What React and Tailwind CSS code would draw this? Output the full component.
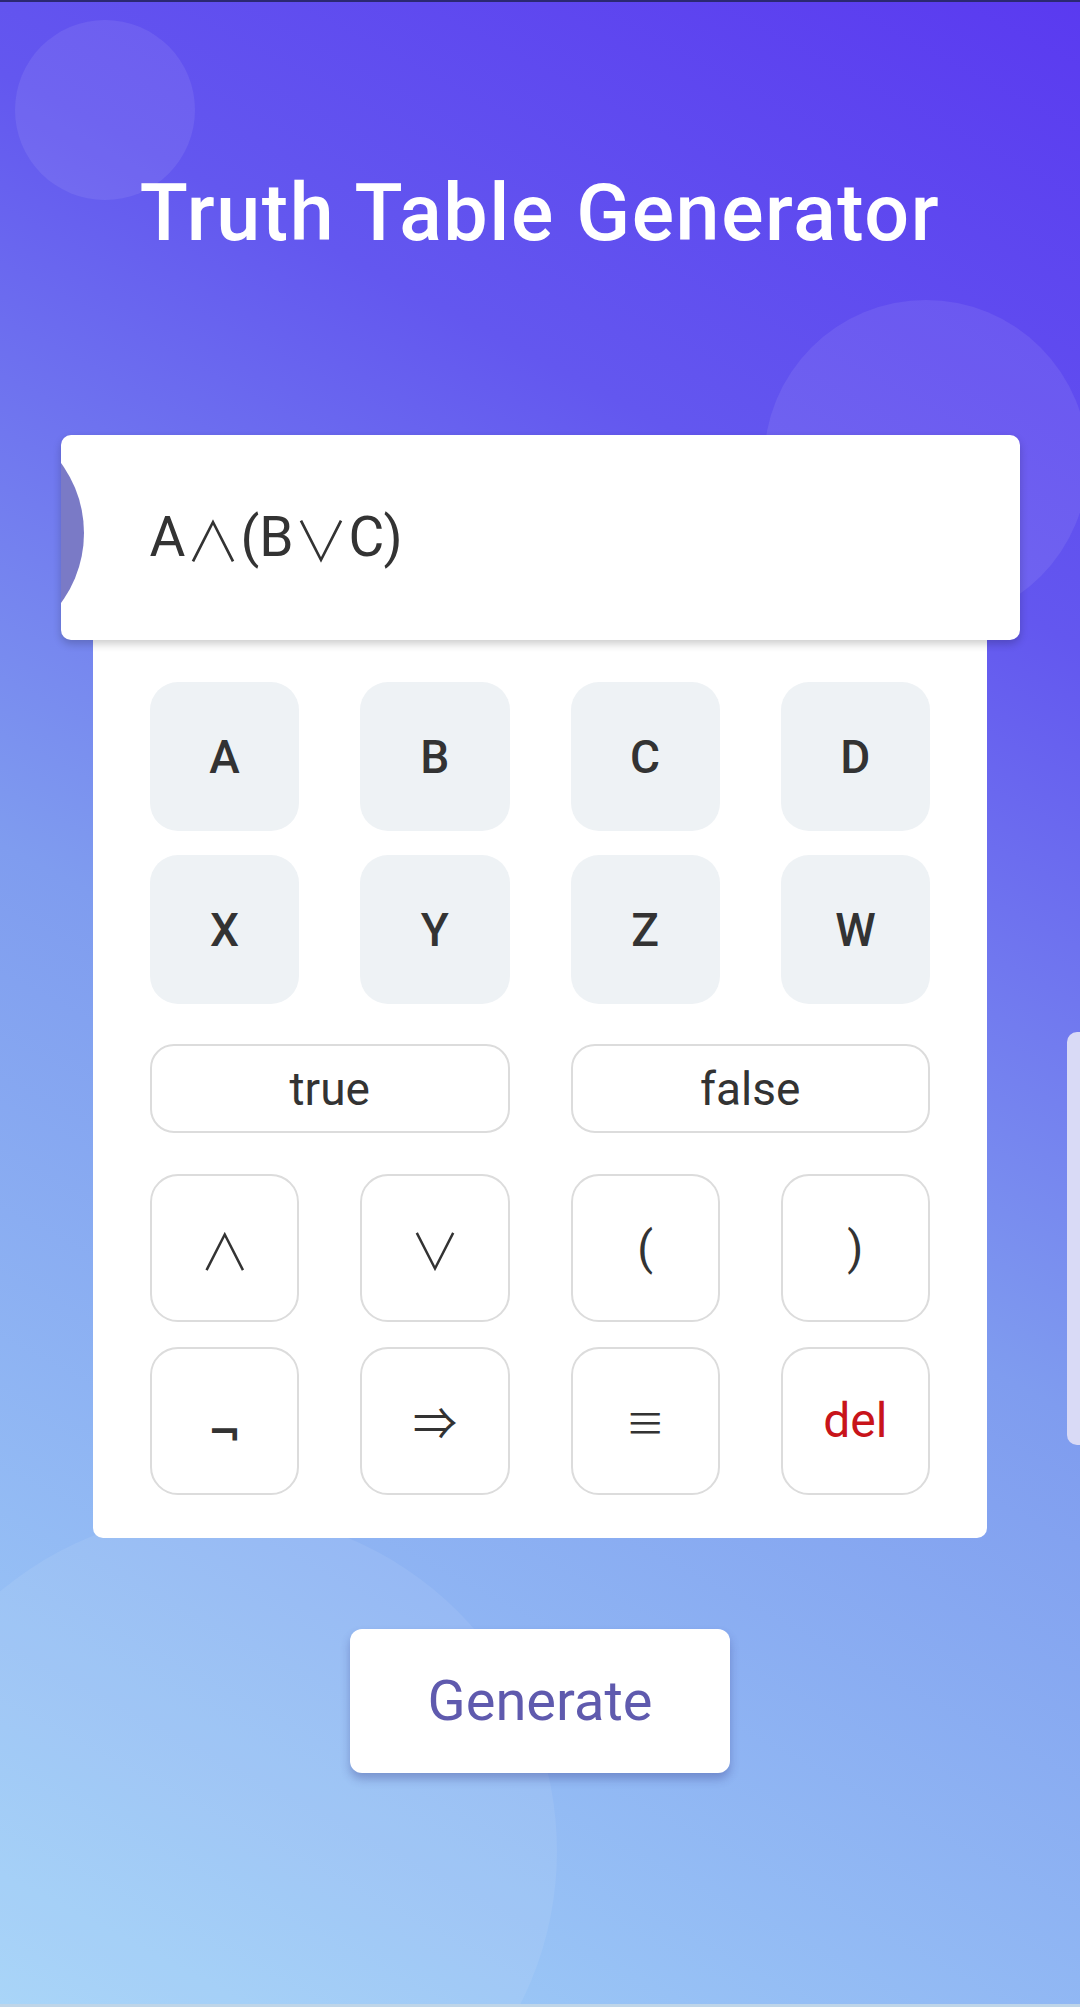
import React from "react";

const sym = { fontFamily: '"Noto Sans CJK JP", "DejaVu Sans", sans-serif' };

function LetterKey({ children }) {
  return (
    <button className="h-[149px] rounded-[28px] bg-[#eef2f5] text-[46px] font-medium text-[#333] flex items-center justify-center leading-none">
      {children}
    </button>
  );
}

function OpKey({ children, className = "" }) {
  return (
    <button
      className={
        "h-[148px] rounded-[28px] bg-white border-2 border-[#dcdcdc] flex items-center justify-center leading-none " +
        className
      }
    >
      {children}
    </button>
  );
}

export default function App() {
  return (
    <div
      className="relative w-full h-[2007px] overflow-hidden border-t-2 border-[#2b2872] border-b-[3px] border-b-[#bfd5e8] bg-[linear-gradient(28deg,#a2d2f8_0%,#7f9cef_45%,#6357ef_75%,#5a3af0_100%)] font-['Roboto',sans-serif]"
    >
      {/* decorative circles */}
      <div className="absolute left-[15px] top-[18px] w-[180px] h-[180px] rounded-full bg-white/[0.08]" />
      <div className="absolute left-[764px] top-[298px] w-[324px] h-[324px] rounded-full bg-white/[0.08]" />
      <div className="absolute left-[-121px] top-[1510px] w-[678px] h-[678px] rounded-full bg-white/[0.08]" />

      {/* side tab */}
      <div className="absolute right-0 top-[1030px] w-[13px] h-[413px] rounded-l-[10px] bg-[#d9daf6]" />

      <div className="relative flex flex-col items-center">
        <h1 className="mt-[173px] h-[77px] flex items-center text-[79px] leading-none font-medium text-white tracking-[1.6px]">
          Truth Table Generator
        </h1>

        <div className="mt-[183px] w-[959px] flex flex-col items-center">
          <div className="relative z-10 w-[959px] h-[205px] rounded-[10px] bg-white overflow-hidden shadow-[0_4px_8px_rgba(0,0,0,0.2)] flex items-center pl-[89px]">
            <div className="absolute left-[-213px] top-[-20px] w-[236px] h-[236px] rounded-full bg-[#7a7ac6]" />
            <span className="relative text-[55px] text-[#333] leading-none flex items-center">
              A<span style={sym} className="font-light">∧</span>(B<span style={sym} className="font-light">∨</span>C)
            </span>
          </div>

          <div className="w-[894px] rounded-b-[10px] bg-white px-[57px] pt-[42px] pb-[43px]">
            <div className="grid grid-cols-4 gap-x-[61px] gap-y-[24px]">
              {["A", "B", "C", "D", "X", "Y", "Z", "W"].map((k) => (
                <LetterKey key={k}>{k}</LetterKey>
              ))}
            </div>

            <div className="grid grid-cols-2 gap-x-[61px] mt-[40px]">
              <button className="h-[89px] rounded-[24px] bg-white border-2 border-[#dcdcdc] text-[46px] text-[#333] leading-none flex items-center justify-center">
                true
              </button>
              <button className="h-[89px] rounded-[24px] bg-white border-2 border-[#dcdcdc] text-[46px] text-[#333] leading-none flex items-center justify-center">
                false
              </button>
            </div>

            <div className="grid grid-cols-4 gap-x-[61px] gap-y-[25px] mt-[41px]">
              <OpKey>
                <span style={sym} className="text-[50px] text-[#333] font-light">∧</span>
              </OpKey>
              <OpKey>
                <span style={sym} className="text-[50px] text-[#333] font-light">∨</span>
              </OpKey>
              <OpKey>
                <span className="text-[46px] text-[#333]">(</span>
              </OpKey>
              <OpKey>
                <span className="text-[46px] text-[#333]">)</span>
              </OpKey>
              <OpKey>
                <span style={{ fontFamily: '"DejaVu Sans", sans-serif' }} className="text-[40px] text-[#333] font-bold mt-[22px]">¬</span>
              </OpKey>
              <OpKey>
                <span style={sym} className="text-[44px] text-[#333]">⇒</span>
              </OpKey>
              <OpKey>
                <span style={sym} className="text-[40px] text-[#333]">≡</span>
              </OpKey>
              <OpKey>
                <span className="text-[48px] text-[#c8141a]">del</span>
              </OpKey>
            </div>
          </div>
        </div>

        <button className="mt-[91px] w-[380px] h-[144px] rounded-[12px] bg-white shadow-[0_6px_10px_rgba(40,40,120,0.3)] flex items-center justify-center text-[56px] text-[#5f5aae] leading-none">
          Generate
        </button>
      </div>
    </div>
  );
}
